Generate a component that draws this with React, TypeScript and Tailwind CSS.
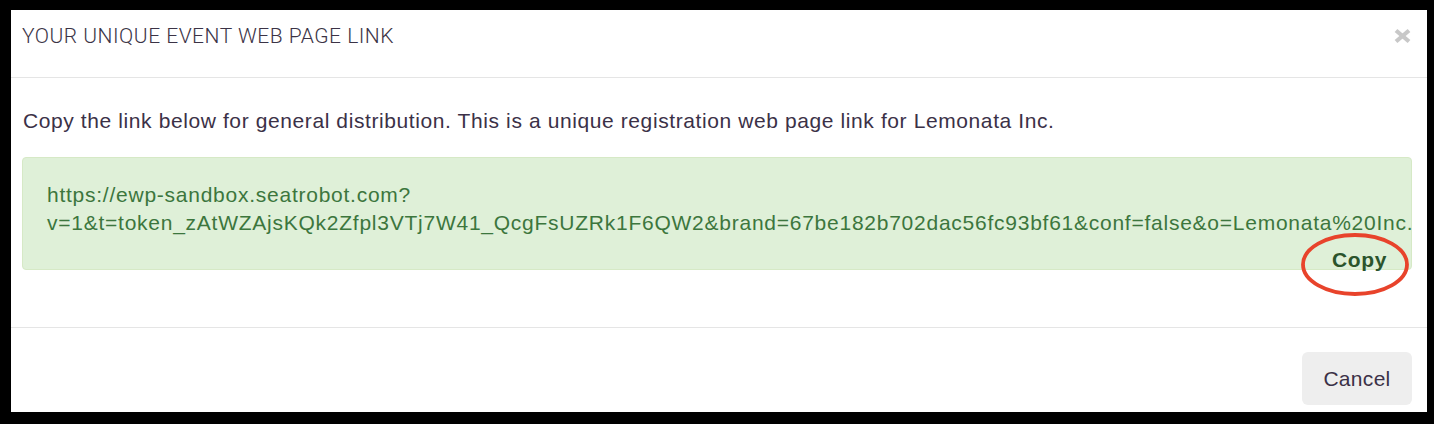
import React from "react";

export default function App() {
  return (
    <div className="w-[1434px] h-[424px] bg-black pt-[10px] pl-[11px] pr-[7px] pb-[12px]">
      <div className="w-full h-full bg-white flex flex-col" style={{ fontFamily: '"Liberation Sans", Arial, sans-serif' }}>
        <div className="h-[68px] border-b border-[#e5e5e5] pl-[11px] pr-[15px] pt-[12px] flex items-start justify-between">
          <div className="text-[21px] leading-[28px] font-light tracking-[0.5px] text-[#3b3346]" style={{ fontFamily: 'Roboto, "Liberation Sans", sans-serif' }}>
            YOUR UNIQUE EVENT WEB PAGE LINK
          </div>
          <svg width="19" height="16" viewBox="0 0 19 16" className="mt-[6px]">
            <line x1="3" y1="2.5" x2="16" y2="13.5" stroke="#c8c8c8" strokeWidth="4.2" />
            <line x1="16" y1="2.5" x2="3" y2="13.5" stroke="#c8c8c8" strokeWidth="4.2" />
          </svg>
        </div>
        <div className="pl-[11px] pr-[15px] pt-[29px] pb-[57px] border-b border-[#e5e5e5]">
          <p className="text-[21px] leading-[28px] tracking-[0.6px] text-[#3b3147] pl-[1px]">
            Copy the link below for general distribution. This is a unique registration web page link for Lemonata Inc.
          </p>
          <div className="relative mt-[22px] h-[113px] rounded-[4px] border border-[#d6e9c6] bg-[#dff0d8] pl-[24px] pr-[24px] pt-[23px]">
            <div className="text-[21px] leading-[28px] tracking-[0.75px] text-[#3c763d] whitespace-nowrap">
              <div>https://ewp-sandbox.seatrobot.com?</div>
              <div>v=1&amp;t=token_zAtWZAjsKQk2Zfpl3VTj7W41_QcgFsUZRk1F6QW2&amp;brand=67be182b702dac56fc93bf61&amp;conf=false&amp;o=Lemonata%20Inc.</div>
            </div>
            <div className="flex justify-end mt-[13px]">
              <span className="text-[21px] leading-[20px] font-bold tracking-[0.6px] text-[#2b542c]">Copy</span>
            </div>
            <svg className="absolute right-[2px] top-[75px]" width="108" height="63" viewBox="0 0 108 63">
              <ellipse cx="54" cy="31.5" rx="52" ry="29.5" fill="none" stroke="#e8432b" strokeWidth="3.8" />
            </svg>
          </div>
        </div>
        <div className="flex justify-end pl-[11px] pr-[15px] pt-[24px]">
          <button className="w-[110px] h-[53px] rounded-[6px] bg-[#eeeeee] text-[21px] tracking-[0.3px] text-[#3b3147] flex items-center justify-center">
            Cancel
          </button>
        </div>
      </div>
    </div>
  );
}
